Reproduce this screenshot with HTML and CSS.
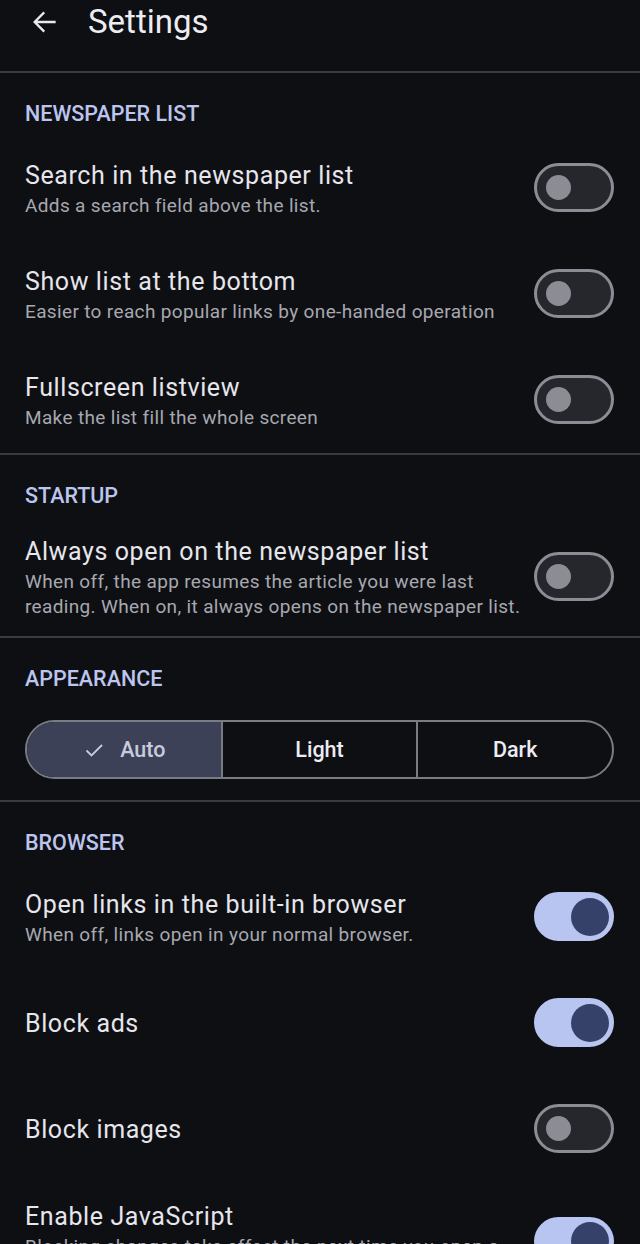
FILE: index.html
```html
<!DOCTYPE html>
<html lang="en">
<head>
  <meta charset="UTF-8" />
  <title>Settings</title>
  <meta name="viewport" content="width=device-width, initial-scale=1.0" />
  <link rel="stylesheet" href="styles.css">
</head>
<body>

  <header class="appbar">
    <button class="back-btn" aria-label="Back">
      <svg viewBox="0 0 24 24" width="28" height="28" fill="none" stroke="currentColor" stroke-width="2" stroke-linecap="square">
        <path d="M21 12H4.5M11.5 4.5L4 12l7.5 7.5" />
      </svg>
    </button>
    <h1>Settings</h1>
  </header>

  <main class="settings">

    <section class="group">
      <h2 class="group-title">Newspaper list</h2>

      <div class="pref">
        <div class="pref-text">
          <div class="pref-title">Search in the newspaper list</div>
          <div class="pref-sub">Adds a search field above the list.</div>
        </div>
        <span class="switch"><span class="thumb"></span></span>
      </div>

      <div class="pref">
        <div class="pref-text">
          <div class="pref-title">Show list at the bottom</div>
          <div class="pref-sub">Easier to reach popular links by one-handed operation</div>
        </div>
        <span class="switch"><span class="thumb"></span></span>
      </div>

      <div class="pref">
        <div class="pref-text">
          <div class="pref-title">Fullscreen listview</div>
          <div class="pref-sub">Make the list fill the whole screen</div>
        </div>
        <span class="switch"><span class="thumb"></span></span>
      </div>
    </section>

    <section class="group">
      <h2 class="group-title">Startup</h2>

      <div class="pref">
        <div class="pref-text">
          <div class="pref-title">Always open on the newspaper list</div>
          <div class="pref-sub">When off, the app resumes the article you were last reading. When on, it always opens on the newspaper list.</div>
        </div>
        <span class="switch"><span class="thumb"></span></span>
      </div>
    </section>

    <section class="group">
      <h2 class="group-title">Appearance</h2>

      <div class="segmented">
        <button class="seg selected">
          <svg viewBox="0 0 24 24" width="24" height="24" fill="none" stroke="currentColor" stroke-width="1.8">
            <path d="M4.5 12.5l5 5L20 7" />
          </svg>
          Auto
        </button>
        <button class="seg">Light</button>
        <button class="seg">Dark</button>
      </div>
    </section>

    <section class="group">
      <h2 class="group-title">Browser</h2>

      <div class="pref">
        <div class="pref-text">
          <div class="pref-title">Open links in the built-in browser</div>
          <div class="pref-sub">When off, links open in your normal browser.</div>
        </div>
        <span class="switch on"><span class="thumb"></span></span>
      </div>

      <div class="pref">
        <div class="pref-text">
          <div class="pref-title">Block ads</div>
        </div>
        <span class="switch on"><span class="thumb"></span></span>
      </div>

      <div class="pref">
        <div class="pref-text">
          <div class="pref-title">Block images</div>
        </div>
        <span class="switch"><span class="thumb"></span></span>
      </div>

      <div class="pref">
        <div class="pref-text">
          <div class="pref-title">Enable JavaScript</div>
          <div class="pref-sub">Blocking changes take effect the next time you open a new article.</div>
        </div>
        <span class="switch on"><span class="thumb"></span></span>
      </div>
    </section>

  </main>

</body>
</html>
```

FILE: styles.css
```css
body {
  margin: 0;
  background: #0e0f13;
  color: #e4e4ea;
  font-family: Roboto, "Noto Sans", sans-serif;
  overflow: hidden;
}

.appbar {
  display: flex;
  align-items: flex-start;
  height: 71px;
  padding-left: 24px;
}

.back-btn {
  background: none;
  border: none;
  color: #e8e8ee;
  padding: 0;
  margin-top: 8px;
  width: 40px;
  height: 28px;
  display: flex;
  align-items: center;
  justify-content: center;
}

.appbar h1 {
  margin: 0 0 0 24px;
  font-size: 33px;
  font-weight: 400;
  line-height: 44px;
  color: #ececf2;
}

.group {
  border-top: 2px solid #3a3b40;
}

.group-title {
  margin: 0;
  padding: 32px 25px 12px;
  font-size: 21.5px;
  line-height: 18px;
  font-weight: 500;
  text-transform: uppercase;
  color: #bcc5ee;
}

.pref {
  display: flex;
  align-items: center;
  gap: 12px;
  min-height: 106px;
  padding: 16px 26px 17px 25px;
  box-sizing: border-box;
}

.pref-text {
  flex: 1;
  padding-top: 2px;
}

.pref-title {
  font-size: 25px;
  line-height: 34px;
  letter-spacing: 0.6px;
  color: #e6e6ec;
}

.pref-sub {
  font-size: 19px;
  line-height: 25px;
  letter-spacing: 0.35px;
  color: #a7a8b0;
}

.switch {
  flex: none;
  width: 80px;
  height: 49px;
  box-sizing: border-box;
  border: 3px solid #8c8d94;
  border-radius: 25px;
  background: #25272d;
  display: flex;
  align-items: center;
  padding: 0 9px;
}

.switch .thumb {
  width: 25px;
  height: 25px;
  border-radius: 50%;
  background: #8c8d94;
}

.switch.on {
  border-color: #b9c5f1;
  background: #b9c5f1;
  justify-content: flex-end;
  padding: 0 2px;
}

.switch.on .thumb {
  width: 38px;
  height: 38px;
  background: #36416a;
}

.segmented {
  display: flex;
  margin: 20px 26px 21px 25px;
  height: 59px;
  border: 2px solid #7a7c84;
  border-radius: 30px;
  overflow: hidden;
  box-sizing: border-box;
}

.seg {
  flex: 1;
  display: flex;
  align-items: center;
  justify-content: center;
  gap: 14px;
  background: none;
  border: none;
  border-left: 2px solid #7a7c84;
  color: #ececf2;
  font-family: Roboto, "Noto Sans", sans-serif;
  font-size: 21.5px;
  font-weight: 500;
  padding: 0;
}

.seg:first-child {
  border-left: none;
}

.seg.selected {
  background: #3c4158;
  color: #c8cbdc;
}
```
